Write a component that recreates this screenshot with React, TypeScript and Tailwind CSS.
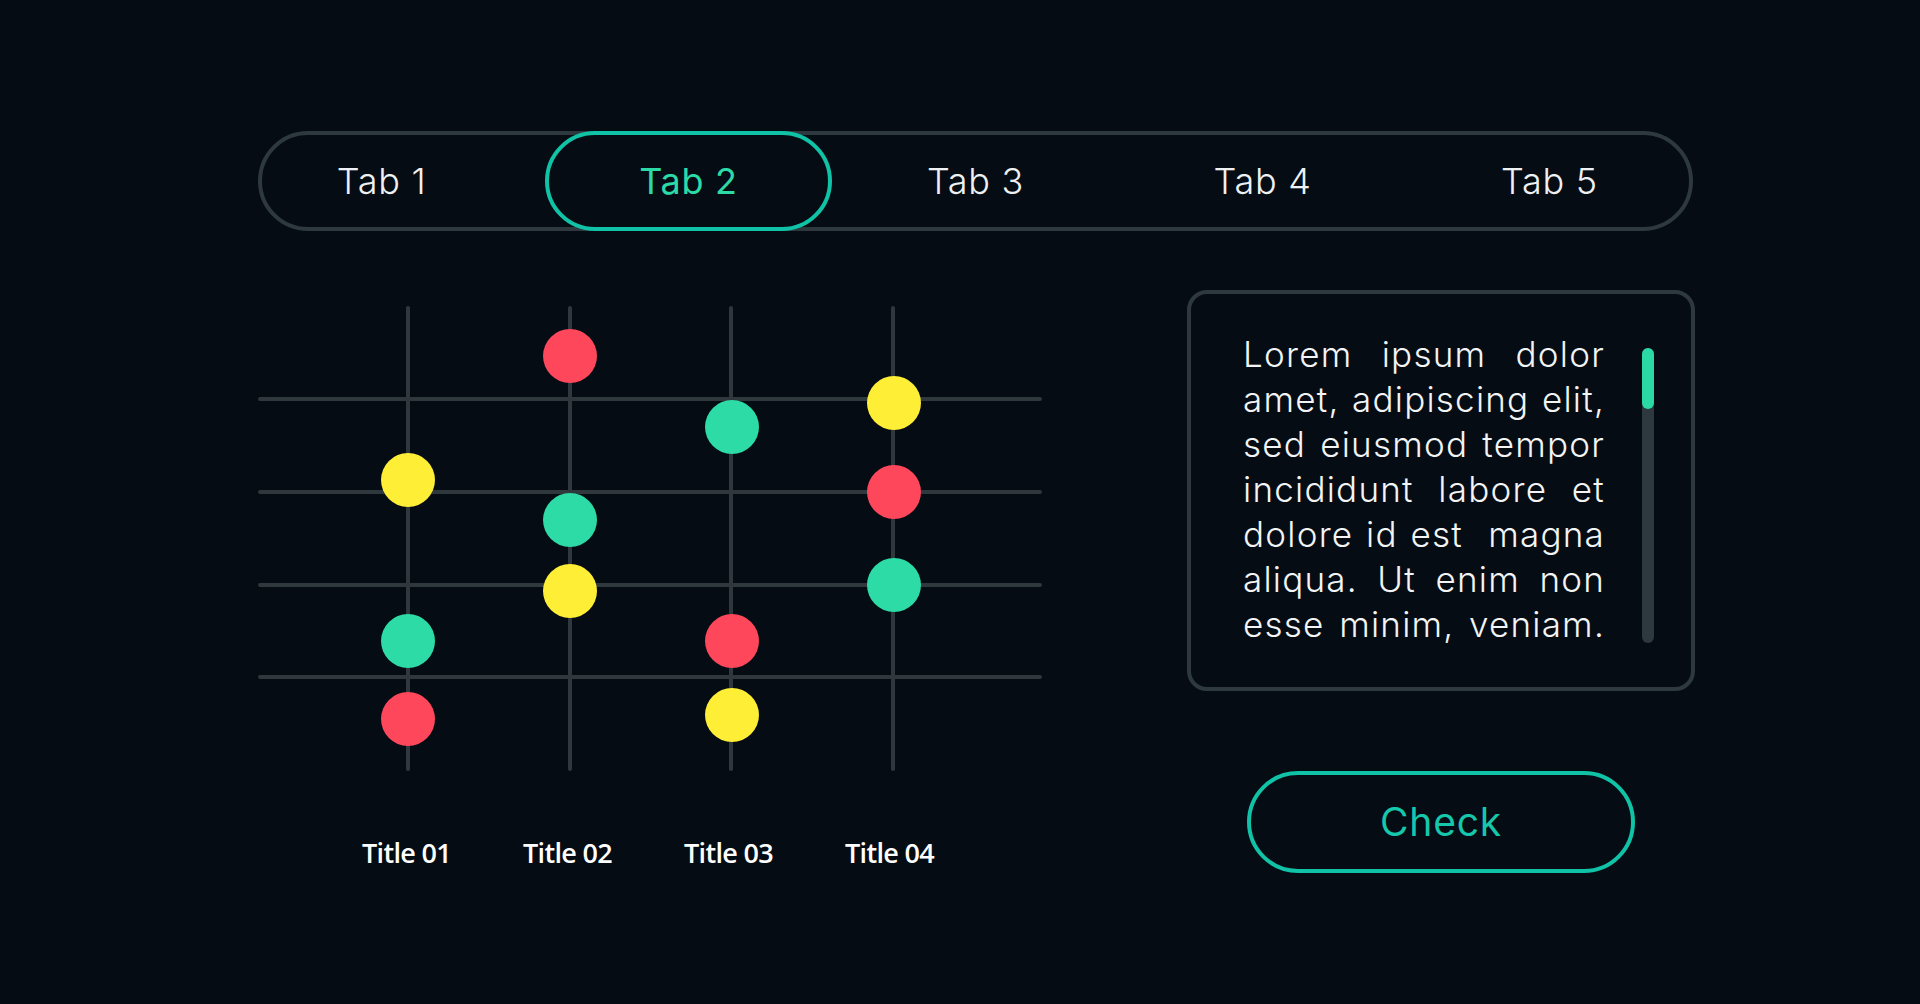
const tabs = ["Tab 1", "Tab 2", "Tab 3", "Tab 4", "Tab 5"];

const cols = [150, 312, 473, 635];
const rows = [93, 186, 279, 371];

const dots: { x: number; y: number; c: string }[] = [
  { x: 150, y: 174, c: "#ffee36" },
  { x: 150, y: 335, c: "#2ddba6" },
  { x: 150, y: 413, c: "#ff475c" },
  { x: 312, y: 50, c: "#ff475c" },
  { x: 312, y: 214, c: "#2ddba6" },
  { x: 312, y: 285, c: "#ffee36" },
  { x: 474, y: 121, c: "#2ddba6" },
  { x: 474, y: 335, c: "#ff475c" },
  { x: 474, y: 409, c: "#ffee36" },
  { x: 636, y: 97, c: "#ffee36" },
  { x: 636, y: 186, c: "#ff475c" },
  { x: 636, y: 279, c: "#2ddba6" },
];

const lines = [
  "Lorem ipsum dolor",
  "amet, adipiscing elit,",
  "sed eiusmod tempor",
  "incididunt labore et",
  "dolore id est  magna",
  "aliqua. Ut enim non",
  "esse minim, veniam.",
];

export default function App() {
  return (
    <div
      className="min-h-screen w-full bg-[#050c13] pl-[258px] pt-[131px] text-white"
      style={{ fontFamily: "Inter, 'Open Sans', sans-serif" }}
    >
      {/* Tabs */}
      <div className="w-[1435px] h-[100px] rounded-full border-4 border-[#2e393f]">
        <div className="-m-1 grid h-[100px] grid-cols-5">
          {tabs.map((t, i) =>
            i === 1 ? (
              <div
                key={t}
                className="flex items-center justify-center rounded-full border-4 border-[#10c3a7] text-[36px] font-normal tracking-[0.02em] text-[#2bdaa6]"
              >
                {t}
              </div>
            ) : (
              <div
                key={t}
                className={`flex items-center justify-center text-[36px] font-light tracking-[0.02em] text-[#eef1f3] ${i === 0 ? "pr-10" : ""}`}
              >
                {t}
              </div>
            ),
          )}
        </div>
      </div>

      <div className="mt-[59px] flex">
        {/* Chart */}
        <div className="w-[784px] pt-4">
          <svg width="784" height="465" viewBox="0 0 784 465" className="block">
            {rows.map((y) => (
              <line
                key={y}
                x1={2}
                x2={782}
                y1={y}
                y2={y}
                stroke="#2e383d"
                strokeWidth={4}
                strokeLinecap="round"
              />
            ))}
            {cols.map((x) => (
              <line
                key={x}
                x1={x}
                x2={x}
                y1={2}
                y2={463}
                stroke="#2e383d"
                strokeWidth={4}
                strokeLinecap="round"
              />
            ))}
            {dots.map((d, i) => (
              <circle key={i} cx={d.x} cy={d.y} r={27} fill={d.c} />
            ))}
          </svg>
          <div
            className="ml-[68px] mt-[64px] flex"
            style={{ fontFamily: "'Open Sans', sans-serif" }}
          >
            {["Title 01", "Title 02", "Title 03", "Title 04"].map((t) => (
              <div
                key={t}
                className="w-[161px] text-center text-[27px] leading-9 font-semibold tracking-tight text-white"
              >
                {t}
              </div>
            ))}
          </div>
        </div>

        {/* Text panel */}
        <div className="ml-[145px] flex w-[508px] flex-col">
          <div className="flex h-[401px] rounded-[20px] border-4 border-[#2e393f] pl-[52px] pr-[37px] pt-[38px]">
            <div className="w-[362px] text-[35px] leading-[45px] font-light tracking-[0.035em] text-[#f2f4f5]">
              {lines.map((l) => (
                <div key={l} className="whitespace-pre text-justify [text-align-last:justify]">
                  {l}
                </div>
              ))}
            </div>
            <div className="ml-auto mt-[16px] h-[295px] w-3 rounded-full bg-[#2e393f]">
              <div className="h-[61px] w-3 rounded-full bg-[#2ad9a5]" />
            </div>
          </div>
          <button className="mt-[80px] h-[102px] w-[388px] self-center rounded-full border-4 border-[#10c3a7] text-[39px] font-normal tracking-[0.02em] text-[#15c7ab]">
            Check
          </button>
        </div>
      </div>
    </div>
  );
}
